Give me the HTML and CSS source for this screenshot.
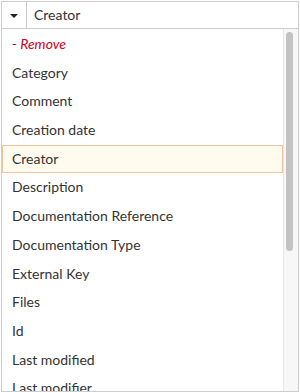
FILE: index.html
```html
<!DOCTYPE html>
<html lang="en">
<head>
    <meta charset="UTF-8">
    <title>Field Picker</title>
    <link rel="stylesheet" href="styles.css">
</head>
<body>
    <div class="picker">
        <div class="select">
            <span class="toggle"><span class="caret"></span></span>
            <span class="value">Creator</span>
        </div>
        <div class="list">
            <ul class="options">
                <li class="option remove">- Remove</li>
                <li class="option">Category</li>
                <li class="option">Comment</li>
                <li class="option">Creation date</li>
                <li class="option selected">Creator</li>
                <li class="option">Description</li>
                <li class="option">Documentation Reference</li>
                <li class="option">Documentation Type</li>
                <li class="option">External Key</li>
                <li class="option">Files</li>
                <li class="option">Id</li>
                <li class="option">Last modified</li>
                <li class="option">Last modifier</li>
            </ul>
            <div class="scrollbar"><div class="thumb"></div></div>
        </div>
    </div>
</body>
</html>
```

FILE: styles.css
```css
body {
    margin: 0;
    font-family: Lato, "Open Sans", sans-serif;
    font-size: 14px;
    color: #333;
    background: #fff;
}
.picker {
    width: 298px;
    height: 391px;
    padding: 1px 0 0 1px;
    display: flex;
    flex-direction: column;
}
.select {
    display: flex;
    height: 26px;
    border: 1px solid #ccc;
    box-sizing: content-box;
}
.toggle {
    width: 24px;
    border-right: 1px solid #ccc;
    display: flex;
    align-items: center;
    justify-content: center;
}
.caret {
    width: 0;
    height: 0;
    border-left: 4px solid transparent;
    border-right: 4px solid transparent;
    border-top: 4px solid #222;
    margin-top: 1px;
}
.value {
    padding-left: 7px;
    line-height: 26px;
}
.list {
    flex: 1;
    display: flex;
    border-left: 1px solid #ccc;
    border-right: 1px solid #ccc;
    border-bottom: 1px solid #ccc;
    overflow: hidden;
}
.options {
    list-style: none;
    margin: 0;
    padding: 1px 0 0;
    flex: 1;
}
.option {
    height: 28.7px;
    line-height: 28.7px;
    padding-left: 10px;
    box-sizing: border-box;
    white-space: nowrap;
}
.remove {
    color: #d0021b;
    font-style: italic;
}
.selected {
    background: #fffbee;
    border: 1px solid #efc3a0;
    line-height: 26.7px;
    padding-left: 9px;
}
.scrollbar {
    width: 12px;
    background: #f7f7f7;
    border-left: 1px solid #e6e6e6;
    padding: 3px 0 0 2px;
}
.thumb {
    width: 7px;
    height: 219px;
    background: #c2c2c2;
    border-radius: 4px;
}
```
